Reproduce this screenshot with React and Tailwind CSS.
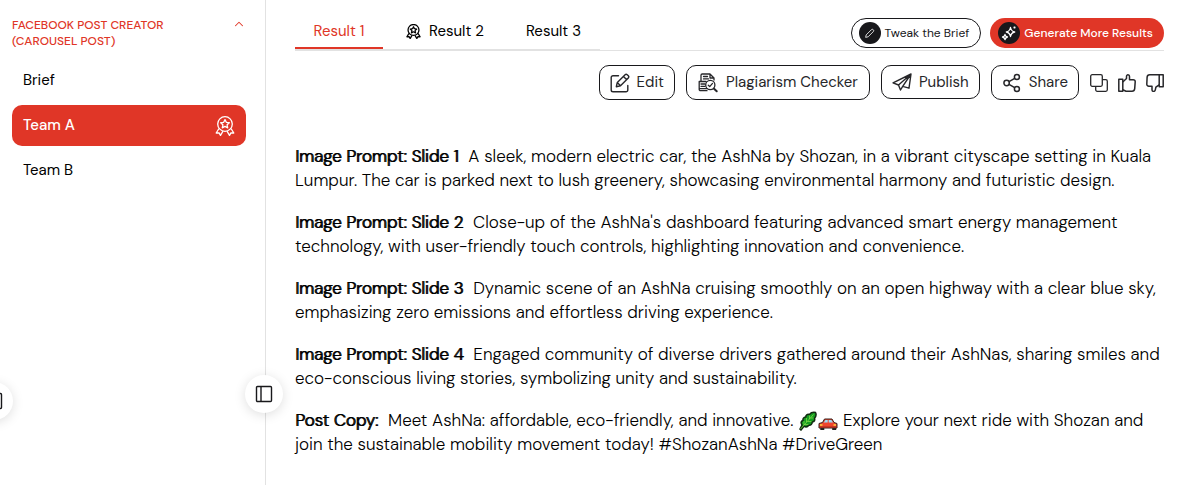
import React from "react";
import { ChevronUp } from "lucide-react";

function Award({ className }) {
  return (
    <svg viewBox="0 0 20 20" className={className} fill="none" stroke="currentColor" strokeLinejoin="round" aria-hidden="true">
      <circle cx="10" cy="8" r="7.3" />
      <path d="M10 3.6l1.3 2.7 3 .4-2.2 2.1.6 3L10 10.4l-2.7 1.4.6-3-2.2-2.1 3-.4z" />
      <path d="M4 12.5L1.2 17l2.9-.1L5.500 19.400 8 15.200M16 12.500l2.800 4.500-2.900-.1-1.400 2.500L12 15.200" />
    </svg>
  );
}

function Pencil({ className }) {
  return (
    <svg viewBox="0 0 12 12" className={className} fill="none" stroke="currentColor" strokeWidth="0.9" strokeLinejoin="round" aria-hidden="true">
      <path d="M1.800 10.200l.6-2.700L8 1.900a1.400 1.400 0 0 1 2.100 2.100L4.500 9.600z" />
    </svg>
  );
}

function Sparkles({ className }) {
  return (
    <svg viewBox="0 0 16 16" className={className} fill="none" stroke="currentColor" strokeWidth="1.300" strokeLinejoin="round" aria-hidden="true">
      <path d="M9.500 2.500Q10.200 6.300 13.700 7 10.200 7.700 9.500 11.500 8.800 7.700 5.300 7 8.800 6.300 9.500 2.500z" />
      <path d="M4 9.500Q4.400 11.600 6.500 12 4.400 12.400 4 14.700 3.600 12.400 1.500 12 3.600 11.600 4 9.500z" />
      <path d="M13.500 1.500v2M12.500 2.500h2" />
    </svg>
  );
}

function EditIcon() {
  return (
    <svg viewBox="0 0 20 20" className="size-5" fill="none" stroke="currentColor" strokeWidth="1.400" strokeLinejoin="round" strokeLinecap="round" aria-hidden="true">
      <path d="M8.500 2.700H3a1.800 1.800 0 0 0-1.800 1.800V17A1.800 1.800 0 0 0 3 18.800h13a1.800 1.800 0 0 0 1.800-1.800v-4.500" />
      <path d="M6.300 13.700l1-4.200 7.800-7.800a1.500 1.500 0 0 1 2.100 0l1.100 1.100a1.500 1.500 0 0 1 0 2.100l-7.800 7.800z M13.400 3.400l3.200 3.200M7.300 9.500l3.200 3.200" />
    </svg>
  );
}

function PlagiarismIcon() {
  return (
    <svg viewBox="0 0 20 20" className="size-5" fill="none" stroke="currentColor" strokeWidth="1.300" strokeLinejoin="round" strokeLinecap="round" aria-hidden="true">
      <path d="M3 8V2.200A1.200 1.200 0 0 1 4.200 1H12l4 4v2M12 1v4h4M5.500 3.500h4M5.500 5.900h5" />
      <path d="M9 17.700H2.500A1.300 1.300 0 0 1 1.200 16.400V8.500H8M3 11h4M3 13.300h4M1.500 15.700h7.500" />
      <circle cx="12.300" cy="12" r="4.600" />
      <path d="M10.300 12.300l1.400 1.300 2.800-3.200" />
      <path d="M15.800 15.600l2.900 2.700" strokeWidth="2" />
    </svg>
  );
}

function PublishIcon() {
  return (
    <svg viewBox="0 0 20 20" className="size-5" fill="none" stroke="currentColor" strokeWidth="1.400" strokeLinejoin="round" aria-hidden="true">
      <path d="M19 2L1 10.800l5.500 2.200L19 2l-2 14.200-6.300-1.800L19 2M6.500 13l2 5 2.200-3.600" />
    </svg>
  );
}

function ShareIcon() {
  return (
    <svg viewBox="0 0 20 20" className="size-5" fill="none" stroke="currentColor" strokeWidth="1.500" aria-hidden="true">
      <circle cx="4.600" cy="10" r="2.700" />
      <circle cx="14.900" cy="4" r="2.500" />
      <circle cx="14.900" cy="16" r="2.500" />
      <path d="M7 8.700l5.700-3.400M7 11.300l5.700 3.400" />
    </svg>
  );
}

function CopyIcon() {
  return (
    <svg viewBox="1 1 18 18" className="size-[18px]" fill="none" stroke="currentColor" strokeWidth="1.300" aria-hidden="true">
      <rect x="1.700" y="1.700" width="11.600" height="11.600" rx="1.500" />
      <path d="M13.300 6.700h3.500a1.500 1.500 0 0 1 1.500 1.500v8.600a1.500 1.500 0 0 1-1.500 1.500H8.200a1.500 1.500 0 0 1-1.500-1.500v-3.500" />
    </svg>
  );
}

function ThumbUp() {
  return (
    <svg viewBox="1 1 18 18" className="size-[18px]" fill="none" stroke="currentColor" strokeWidth="1.500" strokeLinejoin="round" aria-hidden="true">
      <path d="M1.800 6.200h4v12h-4z" />
      <path d="M5.800 9L9.500 5.500V3.500c0-2.400 3-2 3 0v3.200h3.700a2 2 0 0 1 2 2.200l-.5 6.700c-.2 1.700-1 2.600-2.700 2.600H9l-3.200-1.500" />
    </svg>
  );
}

function ThumbDown() {
  return (
    <svg viewBox="1 1 18 18" className="size-[18px]" fill="none" stroke="currentColor" strokeWidth="1.500" strokeLinejoin="round" aria-hidden="true">
      <path d="M14.200 1.800h4v12h-4z" />
      <path d="M14.200 1.800H4.700C3 1.800 2.200 2.700 2.100 4.400l-.3 6.600a2 2 0 0 0 2 2.200h3.200v3.500c0 2.200 2.900 2.200 3.300.2l.6-2.700 3.300-2.400" />
    </svg>
  );
}

function PanelIcon() {
  return (
    <svg viewBox="0 0 18 18" className="size-[18px]" fill="none" stroke="#18181b" strokeWidth="1.400" aria-hidden="true">
      <rect x="1.500" y="1.500" width="15" height="15" rx="1" />
      <path d="M6 1.500v15" />
    </svg>
  );
}

function Leaf() {
  return (
    <svg viewBox="0 0 20 20" className="inline-block size-5 align-text-bottom" role="img" aria-label="Leafy green">
      <path d="M2 18L4 14Q1.800 10.500 5 9.500 4.500 6.500 7.700 6 8 2.800 11.400 3.500 13.500.8 17.500 1.500 19 4.500 16.500 7.200 17.500 10.400 14.300 11 14 14.500 10.800 14.200 8.800 17 6 15.200L3 19z" fill="#159c20" stroke="#102a10" strokeWidth="1.500" />
      <path d="M2.500 18L15.500 3.500M6 14V10M8.500 11V7M11.500 8V4.500M6.500 13.500h4M9.500 10.500h4M12.500 7h3" stroke="#8be04b" strokeWidth="0.700" fill="none" />
    </svg>
  );
}

function Car() {
  return (
    <svg viewBox="0 0 20 20" className="inline-block size-5 align-text-bottom" role="img" aria-label="Car">
      <path d="M2.300 16h4v3h-4zM14.200 16h4v3h-4z" fill="#222" />
      <path d="M1 12.500L4.500 11.500 6.500 8H14L16 11.500l3 1v4.500H1z" fill="#f0442d" stroke="#35201d" strokeWidth="1" strokeLinejoin="round" />
      <path d="M5.800 11.500L7.400 9h2.300V11.500zM10.700 9h2.700L15 11.500h-4.300z" fill="#9ddcf5" />
      <path d="M2 13.200h2.500v1.500H2zM15.500 13.200H18v1.500h-2.500z" fill="#ffd23c" />
      <path d="M1.500 16h17" stroke="#a3261a" />
    </svg>
  );
}

const slides = [
  ["Image Prompt: Slide 1", "A sleek, modern electric car, the AshNa by Shozan, in a vibrant cityscape setting in Kuala", "Lumpur. The car is parked next to lush greenery, showcasing environmental harmony and futuristic design."],
  ["Image Prompt: Slide 2", "Close-up of the AshNa's dashboard featuring advanced smart energy management", "technology, with user-friendly touch controls, highlighting innovation and convenience."],
  ["Image Prompt: Slide 3", "Dynamic scene of an AshNa cruising smoothly on an open highway with a clear blue sky,", "emphasizing zero emissions and effortless driving experience."],
  ["Image Prompt: Slide 4", "Engaged community of diverse drivers gathered around their AshNas, sharing smiles and", "eco-conscious living stories, symbolizing unity and sustainability."],
];

const action = "flex items-center rounded-[10px] border border-[#18181b] text-[15px]";
const heading = "mr-[10px] font-light [text-shadow:1px_0_0_currentColor]";

export default function App() {
  return (
    <div className="relative flex min-h-screen overflow-hidden bg-white font-['DM_Sans',Inter,sans-serif] text-black">
      <aside className="relative w-[266px] shrink-0 border-r border-[#e2e2e2] pt-[17px] pr-[19px] pl-3">
        <button className="flex w-full items-start justify-between text-left text-[12px] leading-4 font-medium text-[#e03627]">
          <span>FACEBOOK POST CREATOR<br />(CAROUSEL POST)</span>
          <ChevronUp className="size-[14px]" strokeWidth={1.8} aria-hidden="true" />
        </button>
        <nav className="mt-[11px] flex flex-col gap-1 text-[15px]">
          <a href="#brief" className="flex h-[41px] items-center px-[11px]">Brief</a>
          <a href="#team-a" className="flex h-[41px] items-center justify-between rounded-[10px] bg-[#e03627] px-[11px] font-medium text-white">
            Team A
            <Award className="size-5 stroke-[1.3]" />
          </a>
          <a href="#team-b" className="flex h-[41px] items-center px-[11px]">Team B</a>
        </nav>
        <button aria-label="Toggle sidebar" className="absolute top-[375px] -right-[18px] z-10 flex size-[38px] items-center justify-center rounded-full bg-white shadow-[0_2px_12px_rgba(0,0,0,0.13)]">
          <PanelIcon />
        </button>
      </aside>
      <button aria-label="Toggle main menu" className="absolute top-[382px] -left-[25px] flex size-[38px] items-center justify-center rounded-full bg-white shadow-[0_2px_12px_rgba(0,0,0,0.13)]">
        <PanelIcon />
      </button>

      <main className="min-w-0 flex-1 pt-[14px] pr-[25px] pl-[29px]">
        <header className="flex items-end justify-between border-b border-[#e2e2e2]">
          <div role="tablist" className="flex border-b border-[#e2e2e2] text-[15px]">
            <button role="tab" aria-selected="true" className="h-[35px] w-[88px] border-b-2 border-[#e03627] pt-[2px] text-[#e03627]">Result 1</button>
            <button role="tab" aria-selected="false" className="flex h-[35px] w-[124px] items-center justify-center gap-2 border-b-2 border-transparent pt-[2px]">
              <Award className="size-[15px] stroke-[1.7]" />Result 2
            </button>
            <button role="tab" aria-selected="false" className="h-[35px] w-[93px] border-b-2 border-transparent pt-[2px]">Result 3</button>
          </div>
          <div className="mb-[2px] flex gap-[9px] text-[12px]">
            <button className="flex h-[30px] items-center gap-1 rounded-full border border-[#18181b] pr-[11px] pl-[7px] text-[#18181b]">
              <span className="flex size-[22px] items-center justify-center rounded-full bg-[#18181b] text-white"><Pencil className="size-[11px]" /></span>
              Tweak the Brief
            </button>
            <button className="flex h-[30px] items-center gap-1 rounded-full bg-[#e03627] pr-[11px] pl-2 font-medium text-white">
              <span className="flex size-[22px] items-center justify-center rounded-full bg-[#18181b]"><Sparkles className="size-4" /></span>
              Generate More Results
            </button>
          </div>
        </header>

        <div className="mt-[14px] flex items-start justify-end gap-[11px] text-[#27272a]">
          <button className={`${action} h-[35px] gap-[7px] px-[10px]`}><EditIcon />Edit</button>
          <button className={`${action} h-[35px] gap-2 px-[11px]`}><PlagiarismIcon />Plagiarism Checker</button>
          <button className={`${action} h-[34px] gap-[7px] px-[10px]`}><PublishIcon />Publish</button>
          <button className={`${action} h-[35px] gap-[7px] px-[10px]`}><ShareIcon />Share</button>
          <div className="flex h-[35px] items-center gap-[10px]">
            <button aria-label="Copy"><CopyIcon /></button>
            <button aria-label="Like"><ThumbUp /></button>
            <button aria-label="Dislike"><ThumbDown /></button>
          </div>
        </div>

        <article className="mt-11 flex flex-col gap-[18px] text-[17px] leading-6 font-light whitespace-nowrap">
          {slides.map(([title, first, second]) => (
            <p key={title}>
              <strong className={heading}>{title}</strong>{first}<br />{second}
            </p>
          ))}
          <p>
            <strong className={heading}>Post Copy:</strong>Meet AshNa: affordable, eco-friendly, and innovative. <Leaf /><Car /> Explore your next ride with Shozan and<br />join the sustainable mobility movement today! #ShozanAshNa #DriveGreen
          </p>
        </article>
      </main>
    </div>
  );
}
